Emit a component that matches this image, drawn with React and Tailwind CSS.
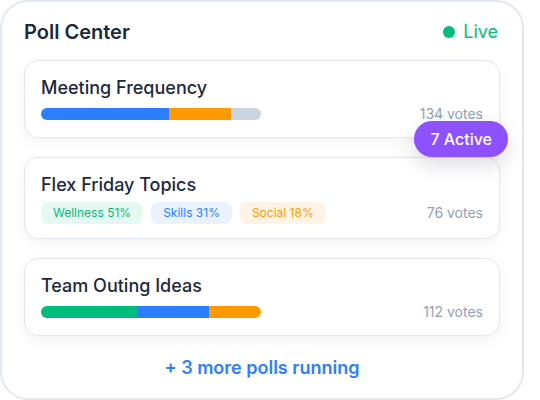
import React from 'react';

// Poll data
const POLLS = [
  {
    id: 1,
    title: 'Meeting Frequency',
    votes: 134,
    segments: [
      { width: 128, color: 'bg-blue-500' },
      { width: 62, color: 'bg-amber-500' },
      { width: 30, color: 'bg-slate-300' },
    ],
  },
  {
    id: 2,
    title: 'Flex Friday Topics',
    votes: 76,
    chips: [
      { label: 'Wellness 51%', className: 'bg-emerald-500/10 text-emerald-500' },
      { label: 'Skills 31%', className: 'bg-blue-500/10 text-blue-500' },
      { label: 'Social 18%', className: 'bg-amber-500/10 text-amber-500' },
    ],
  },
  {
    id: 3,
    title: 'Team Outing Ideas',
    votes: 112,
    segments: [
      { width: 96, color: 'bg-emerald-500' },
      { width: 72, color: 'bg-blue-500' },
      { width: 52, color: 'bg-amber-500' },
    ],
  },
];

const PollCard = ({ poll }) => (
  <div
    className={`rounded-[14px] border border-slate-200 bg-white px-4 pt-4 shadow-[0_4px_14px_rgba(15,23,42,0.05)] ${
      poll.chips ? 'pb-3.5' : 'pb-4'
    }`}
  >
    <h3 className="text-lg leading-[22px] font-medium text-slate-800">{poll.title}</h3>

    {poll.chips ? (
      <div className="mt-1.5 flex items-center justify-between">
        <div className="flex gap-2">
          {poll.chips.map((chip) => (
            <span
              key={chip.label}
              className={`flex h-[22px] items-center rounded-lg px-3 text-xs ${chip.className}`}
            >
              {chip.label}
            </span>
          ))}
        </div>
        <span className="text-sm leading-none text-slate-400">{poll.votes} votes</span>
      </div>
    ) : (
      <div className="mt-2 flex items-center justify-between">
        <div className="flex h-3 w-[220px] overflow-hidden rounded-full">
          {poll.segments.map((seg, i) => (
            <div key={i} className={`h-full ${seg.color}`} style={{ width: seg.width }} />
          ))}
        </div>
        <span className="text-sm leading-none text-slate-400">{poll.votes} votes</span>
      </div>
    )}
  </div>
);

const App = () => {
  return (
    <div className="min-h-screen bg-white font-['Inter',sans-serif]">
      <div className="relative w-[524px] rounded-[28px] border-2 border-slate-200 bg-white px-[22px] pt-4 pb-4">
        <div className="flex h-7 items-center justify-between">
          <h2 className="text-xl font-semibold text-slate-800">Poll Center</h2>
          <div className="flex items-center gap-2 pr-0.5">
            <span className="h-3 w-3 rounded-full bg-emerald-500" />
            <span className="text-lg text-emerald-500">Live</span>
          </div>
        </div>

        <div className="mt-[14px] flex flex-col gap-[19px]">
          {POLLS.map((poll) => (
            <PollCard key={poll.id} poll={poll} />
          ))}
        </div>

        <div className="mt-[18px] text-center text-lg leading-7 font-semibold text-blue-500">
          + 3 more polls running
        </div>

        <div className="absolute top-[119px] right-[14px] flex h-9 items-center rounded-full bg-violet-500 px-4 text-base font-medium text-white shadow-[0_8px_20px_rgba(15,23,42,0.14)]">
          7 Active
        </div>
      </div>
    </div>
  );
};

export default App;
